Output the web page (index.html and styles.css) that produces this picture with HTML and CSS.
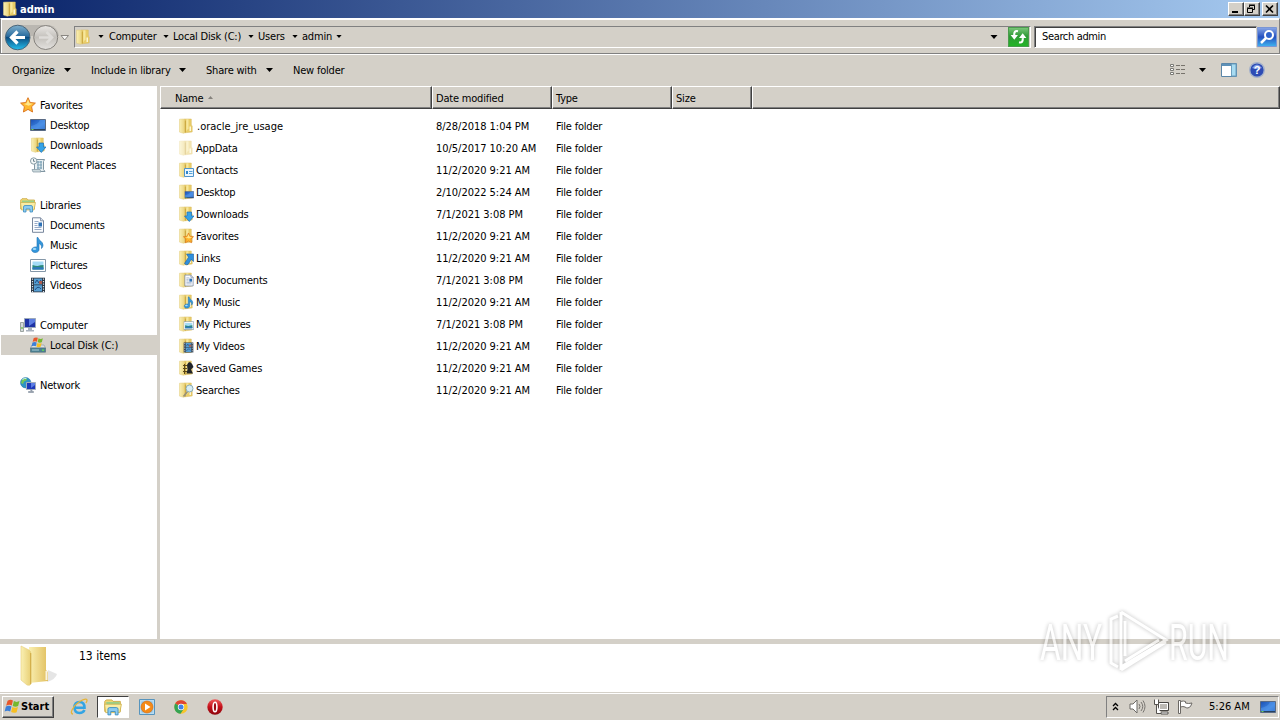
FILE: index.html
```html
<!DOCTYPE html>
<html lang="en">
<head>
  <meta charset="UTF-8">
  <meta name="viewport" content="width=device-width, initial-scale=1.0">
  <title>admin</title>
  <link rel="stylesheet" href="styles.css">
</head>
<body>
  <!-- shared icons -->
  <svg class="sprite" width="0" height="0">
    <defs>
      <linearGradient id="gold" x1="0" x2="1"><stop offset="0" stop-color="#f9eda4"/><stop offset="1" stop-color="#dcb443"/></linearGradient>
      <linearGradient id="leaf" x1="0" x2="1"><stop offset="0" stop-color="#faf0b4"/><stop offset="1" stop-color="#e8cf74"/></linearGradient>
      <linearGradient id="screen" x1="0" y1="0" x2="1" y2="1"><stop offset="0" stop-color="#1a4fb4"/><stop offset=".6" stop-color="#3f86e0"/><stop offset="1" stop-color="#2158b5"/></linearGradient>
      <linearGradient id="blueball" x1="0" y1="0" x2="0" y2="1"><stop offset="0" stop-color="#7fb0cd"/><stop offset=".45" stop-color="#2a6c9f"/><stop offset=".5" stop-color="#0c4c80"/><stop offset="1" stop-color="#25c0ee"/></linearGradient>
      <linearGradient id="greyball" x1="0" y1="0" x2="0" y2="1"><stop offset="0" stop-color="#e9e7e4"/><stop offset=".5" stop-color="#c3c0bb"/><stop offset="1" stop-color="#e4e2df"/></linearGradient>
      <linearGradient id="green" x1="0" y1="0" x2="0" y2="1"><stop offset="0" stop-color="#7dc77c"/><stop offset=".45" stop-color="#2f9a35"/><stop offset="1" stop-color="#22b626"/></linearGradient>
      <linearGradient id="find" x1="0" y1="0" x2="0" y2="1"><stop offset="0" stop-color="#8aa8e6"/><stop offset=".5" stop-color="#2450c0"/><stop offset="1" stop-color="#3fb4f0"/></linearGradient>
      <linearGradient id="redball" x1="0" y1="0" x2="0" y2="1"><stop offset="0" stop-color="#ef5a5a"/><stop offset=".5" stop-color="#c4101a"/><stop offset="1" stop-color="#8c060c"/></linearGradient>

      <symbol id="folder" viewBox="0 0 16 16">
        <path d="M6 1h7.300v6l.9.8V14L7 14.800z" fill="#e9cd68" stroke="#d9b95c" stroke-width=".5"/>
        <path d="M8.300 1.300h2.200v9l-2.200 3z" fill="#f7e79c"/>
        <path d="M11.500 8.500h1.500V13h-1.500z" fill="#fdf6d4"/>
        <path d="M1.500 1.200L5.500 1l2 1v12.500l-2 .8-4-1.200z" fill="url(#leaf)" stroke="#e3ca78" stroke-width=".5"/>
        <path d="M7.300 2.500v12" stroke="#c49c30" stroke-width=".9"/>
      </symbol>
      <symbol id="desktop" viewBox="0 0 16 16">
        <path d="M.5 2.500h15v11H.5z" fill="url(#screen)" stroke="#596a84"/>
        <path d="M1 9c5-1 8-3 9-6h5v9H1z" fill="#5b9df0" opacity=".45"/>
        <path d="M1 12.500h14" stroke="#27415f"/>
        <path d="M1.500 12.500h2" stroke="#6cce58"/>
      </symbol>
      <symbol id="down" viewBox="0 0 16 16">
        <path d="M9 6h4.500v4H16l-4.700 5.500L6.500 10H9z" fill="#35a3e8" stroke="#1c6fb4" stroke-width=".7"/>
      </symbol>
      <symbol id="star" viewBox="0 0 16 16">
        <path d="M8 .7l2.200 4.800 5.200.6-3.800 3.600 1 5.300L8 12.400 3.400 15l1-5.300L.6 6.100l5.200-.6z" fill="#ffb82e" stroke="#d9701c" stroke-width=".9"/>
        <path d="M8 2.500l1.500 3.700 3.500.6-4.500 2L4 7l2.600-.8z" fill="#ffe78c"/>
      </symbol>
      <symbol id="recent" viewBox="0 0 16 16">
        <path d="M4.500 2.500h10l-1 2v8l1.500 2H5.500l-1-2z" fill="#e7eff2" stroke="#8196a2"/>
        <path d="M7 5h5M7 8h5M7 11h5" stroke="#7fa4ba" stroke-width="1.200"/>
        <path d="M8 4v8M11 4v8" stroke="#7299ae"/>
        <circle cx="3.700" cy="4" r="3.200" fill="#f5f8f8" stroke="#889ca5"/>
        <path d="M3.500 2v2.300h1.700" fill="none" stroke="#526c78" stroke-width=".8"/>
        <path d="M2 12.500h8l1 2.500H3z" fill="#cbd8dc" stroke="#8196a2" stroke-width=".7"/>
      </symbol>
      <symbol id="library" viewBox="0 0 16 16">
        <path d="M.7 3L2 1.700h5L8 3h6.500v9H.7z" fill="#f1d874" stroke="#c9a63e" stroke-width=".8"/>
        <path d="M2 3.500h12v3H2z" fill="#9bcf88"/>
        <path d="M.5 5.500h15L14 13H1.500z" fill="#faeca4" stroke="#cdb04a" stroke-width=".7"/>
        <path d="M3.500 15V10q0-1.500 1.500-1.500h6q1.500 0 1.500 1.500v5H10v-3H6v3z" fill="#8ccbf0" stroke="#3c8dc0" stroke-width=".8"/>
      </symbol>
      <symbol id="document" viewBox="0 0 16 16">
        <path d="M2.500.8h8l3 3v11.500h-11z" fill="#fbfcfe" stroke="#78879d"/>
        <path d="M10.500.8v3h3" fill="#d7deea" stroke="#78879d" stroke-width=".8"/>
        <path d="M4.500 4.500h4M4.500 6.500h3M4.500 8.500h3M4.500 10.500h7M4.500 12.500h7" stroke="#7d94b8" stroke-width=".8"/>
        <path d="M8.500 5.500h3.500v4H8.500z" fill="#2d71b6"/>
      </symbol>
      <symbol id="music" viewBox="0 0 16 16">
        <path d="M8 .5c.5 3 5 4 5 7.500 0 1.500-.6 2.600-1.500 3.500.5-3-1-4.500-2.500-5v6.300C9 14.500 7 15.600 5 15.500c-2.200-.1-3.500-1.400-3.300-3C2 10.600 4.500 9.600 7 10V.5z" fill="#3397dc" stroke="#1d6fb2" stroke-width=".6"/>
        <ellipse cx="4.500" cy="12" rx="1.800" ry="1" fill="#a4dcfa"/>
      </symbol>
      <symbol id="picture" viewBox="0 0 16 16">
        <path d="M.5 2.500h15v12H.5z" fill="#fff" stroke="#8497a8"/>
        <path d="M2.500 4.500h11v8h-11z" fill="#a4dbf6"/>
        <path d="M2.500 8q3 1 5 1 3-1 6-1v4.500h-11z" fill="#2d8a78"/>
        <path d="M2.500 10.500q5-1 11 0v2h-11z" fill="#2d78bd"/>
      </symbol>
      <symbol id="video" viewBox="0 0 16 16">
        <path d="M1 .7h14v14.600H1z" fill="#2a3644"/>
        <path d="M4 1.500h8v6H4zM4 8.300h8v6.200H4z" fill="#569ed2"/>
        <path d="M5 6l2-3 2 3 2-3M5 13q3-5 6-1" stroke="#214f86" fill="none"/>
        <path d="M9 4h3v3H9z" fill="#ad5e50"/>
        <path d="M2.500 1.500v14M13.500 1.500v14" stroke="#dce6ee" stroke-width="1.200" stroke-dasharray="1.300 1.200"/>
      </symbol>
      <symbol id="computer" viewBox="0 0 16 16">
        <path d="M4.500 1.500h11v9h-11z" fill="#1d32a4" stroke="#9aa8ba"/>
        <path d="M9 2h6v3l-6 4z" fill="#6a8ef0" opacity=".8"/>
        <path d="M8 11h4v2H8zM6 13h8v1.500H6z" fill="#a9b2be"/>
        <path d="M.5 5.500h3v9h-3z" fill="#d5dadb" stroke="#88928e" stroke-width=".8"/>
        <path d="M1.200 11h1.600" stroke="#62bb38" stroke-width="1.300"/>
      </symbol>
      <symbol id="winflag" viewBox="0 0 16 16">
        <path d="M3.400 2.500q2.500-1.500 5-.2L7.300 7Q5 5.800 2 7.200z" fill="#e8572a"/>
        <path d="M9.300 2.900q2.500 1.500 5.300 0L13.300 7.600q-2.600 1.200-5.100-.1z" fill="#76b82e"/>
        <path d="M1.800 8.100q2.800-1.400 5.200-.1l-1.200 4.700q-2.600-1.300-5.200.1z" fill="#3c7fd8"/>
        <path d="M7.900 8.500q2.500 1.300 5.200 0l-1.200 4.800q-2.700 1.200-5.200-.1z" fill="#f7bf22"/>
      </symbol>
      <symbol id="disk" viewBox="0 0 16 16">
        <path d="M2 8h12l1.500 3H.5z" fill="#dbe0e3" stroke="#8b969d" stroke-width=".6"/>
        <path d="M.5 11h15v4.200H.5z" fill="#4d8294" stroke="#466873" stroke-width=".6"/>
        <path d="M2 13h7" stroke="#a7cad4"/><path d="M12 13.200h2" stroke="#67e04e" stroke-width="1.300"/>
        <use href="#winflag" x="1" y="-1" width="13" height="13"/>
      </symbol>
      <symbol id="network" viewBox="0 0 16 16">
        <circle cx="5.700" cy="5.700" r="5.200" fill="#2d93c6" stroke="#2a7ba5" stroke-width=".6"/>
        <path d="M2 3q2-2.300 4-2l1 2-3 1.500L3 7 1 6zM6 6l3-1v4l-3 1z" fill="#74c756"/>
        <path d="M2.500 2.500q2-1.600 4-1.200" stroke="#d6f4fc" fill="none"/>
        <path d="M6.500 5.500h9v7h-9z" fill="#1c39ba" stroke="#a1acbd"/>
        <path d="M11 6h4v2l-4 3z" fill="#6a8ef0" opacity=".8"/>
        <path d="M10 13h2v1.500H8.500v1h5v-1H12" stroke="#7b8796" fill="#a9b2be" stroke-width=".6"/>
      </symbol>
      <symbol id="contact" viewBox="0 0 16 16">
        <path d="M6.500 6.500h9v8h-9z" fill="#eaf5fd" stroke="#4f94cb"/>
        <path d="M8 9h2v3H8z" fill="#2f86cc"/><path d="M11 9.500h3.500M11 11.500h3.500" stroke="#58a3d8"/>
      </symbol>
      <symbol id="link" viewBox="0 0 16 16">
        <path d="M8.500 4h7v7.500l-2.300-2L10 14.500q-2 1-3.500-1l4-6.300z" fill="#2f8fdc" stroke="#1a609f" stroke-width=".6"/>
      </symbol>
      <symbol id="knight" viewBox="0 0 16 16">
        <path d="M9 5q1-3 3-3 3 2 3.500 5l-2.500 2.500 2 4H8.500l1-4z" fill="#22252a"/>
        <path d="M5 5.500h4M5 8.500h4M5 11.500h4M6.500 4v10" stroke="#5c4a1a"/>
      </symbol>
      <symbol id="lens" viewBox="0 0 16 16">
        <path d="M9.500 9.500l-4 5" stroke="#9a9276" stroke-width="1.800"/>
        <circle cx="11.500" cy="6.500" r="3.500" fill="#d7edf5" stroke="#8aabb6"/>
      </symbol>
      <symbol id="caret" viewBox="0 0 7 4"><path d="M0 0h7L3.500 4z" fill="#000"/></symbol>
    </defs>
  </svg>

  <div class="titlebar">
    <svg class="icon"><use href="#folder"/></svg>
    <span class="window-title">admin</span>
    <div class="window-buttons">
      <button class="win-btn" aria-label="Minimize"><svg width="11" height="10"><path d="M2 8h6" stroke="#000" stroke-width="2"/></svg></button>
      <button class="win-btn" aria-label="Restore"><svg width="11" height="10"><path d="M3.500 3V1.500h5v4H7M3 1h6M1.500 4.500h5v4h-5zM1 4h6" fill="none" stroke="#000"/></svg></button>
      <button class="win-btn close" aria-label="Close"><svg width="11" height="10"><path d="M2 1.500l7 7M9 1.500l-7 7" stroke="#000" stroke-width="1.600"/></svg></button>
    </div>
  </div>

  <div class="navbar">
    <div class="travel">
      <svg width="71" height="32" viewBox="2 0 71 32">
        <path d="M14 4h34a12 12 0 0 1 10 11H14z" fill="#bab7b1"/>
        <circle cx="16.700" cy="16.500" r="12.300" fill="url(#blueball)" stroke="#496579"/>
        <path d="M24 16.500H11.500M16.500 10.500l-6 6 6 6" fill="none" stroke="#fff" stroke-width="3.200"/>
        <circle cx="44.700" cy="16.500" r="12" fill="url(#greyball)" stroke="#85827d"/>
        <path d="M38 16.500h12M45.500 11l5.500 5.500-5.500 5.500" fill="none" stroke="#dedcd9" stroke-width="2.600"/>
        <path d="M60 14.500h7.500L63.700 19z" fill="#f6f5f3" stroke="#898681"/>
      </svg>
    </div>
    <div class="address">
      <svg class="icon"><use href="#folder"/></svg>
      <svg class="caret first"><use href="#caret"/></svg>
      <span class="crumb c-computer">Computer</span><svg class="caret"><use href="#caret"/></svg>
      <span class="crumb c-disk">Local Disk (C:)</span><svg class="caret"><use href="#caret"/></svg>
      <span class="crumb c-users">Users</span><svg class="caret"><use href="#caret"/></svg>
      <span class="crumb c-admin">admin</span><svg class="caret"><use href="#caret"/></svg>
      <svg class="caret history"><use href="#caret"/></svg>
      <svg class="refresh" width="21" height="20" viewBox="0 0 20 19">
        <path d="M.5.5h19v18H.5z" fill="url(#green)" stroke="#4a9b4d"/>
        <path d="M9.500 4q-4-1-3.500 4M10.500 14.500q4 1 3.500-4" fill="none" stroke="#fff" stroke-width="2"/>
        <path d="M2.500 7.500h7L6 12zM10.500 10.500h7L14 6z" fill="#fff"/>
      </svg>
    </div>
    <div class="search">Search admin</div>
    <svg class="find" width="20" height="20" viewBox="0 0 20 20">
      <path d="M.5.5h19v19H.5z" fill="url(#find)" stroke="#7a96d4"/>
      <path d="M9 11l-5 5" stroke="#fff" stroke-width="2.500"/>
      <circle cx="12" cy="8" r="4" fill="#2e62cb" stroke="#fff" stroke-width="2"/>
    </svg>
  </div>

  <div class="toolbar">
    <span class="tool organize">Organize</span><svg class="caret"><use href="#caret"/></svg>
    <span class="tool include">Include in library</span><svg class="caret"><use href="#caret"/></svg>
    <span class="tool share">Share with</span><svg class="caret"><use href="#caret"/></svg>
    <span class="tool">New folder</span>
    <div class="view-tools">
      <svg width="16" height="14" viewBox="0 0 16 14">
        <path d="M.5 1.500h3v2h-3zM.5 5.500h3v2h-3zM.5 9.500h3v2h-3z" fill="#fff" stroke="#7a7a76"/>
        <path d="M6 2.500h4m1 0h4M6 6.500h4m1 0h4M6 10.500h4m1 0h4" stroke="#77736c"/>
      </svg>
      <svg class="caret"><use href="#caret"/></svg>
      <svg width="16" height="14" viewBox="0 0 16 14">
        <path d="M.5.5h15v13H.5z" fill="#fff" stroke="#5a86a8"/><path d="M1 2h9" stroke="#5d91b8" stroke-width="2"/>
        <path d="M10.500 1h4.500v12h-4.500z" fill="#a8dcf2" stroke="#6d9fbe"/>
      </svg>
      <svg width="16" height="16" viewBox="0 0 16 16">
        <circle cx="8" cy="8" r="7.300" fill="#2d4bb4" stroke="#a5b2ca" stroke-width="1.400"/>
        <path d="M3 6q5-7 10 0-5 2-10 0" fill="#7f9de6"/>
        <text x="8" y="12.300" class="help-mark">?</text>
      </svg>
    </div>
  </div>

  <div class="main">
    <nav class="sidebar">
      <div class="group">
        <div class="node root"><svg class="icon"><use href="#star"/></svg><span>Favorites</span></div>
        <div class="node"><svg class="icon"><use href="#desktop"/></svg><span>Desktop</span></div>
        <div class="node"><svg class="icon"><use href="#folder"/><use href="#down"/></svg><span>Downloads</span></div>
        <div class="node"><svg class="icon"><use href="#recent"/></svg><span>Recent Places</span></div>
      </div>
      <div class="group">
        <div class="node root"><svg class="icon"><use href="#library"/></svg><span>Libraries</span></div>
        <div class="node"><svg class="icon"><use href="#document"/></svg><span>Documents</span></div>
        <div class="node"><svg class="icon"><use href="#music"/></svg><span>Music</span></div>
        <div class="node"><svg class="icon"><use href="#picture"/></svg><span>Pictures</span></div>
        <div class="node"><svg class="icon"><use href="#video"/></svg><span>Videos</span></div>
      </div>
      <div class="group">
        <div class="node root"><svg class="icon"><use href="#computer"/></svg><span>Computer</span></div>
        <div class="node selected"><svg class="icon"><use href="#disk"/></svg><span>Local Disk (C:)</span></div>
      </div>
      <div class="group">
        <div class="node root"><svg class="icon"><use href="#network"/></svg><span>Network</span></div>
      </div>
    </nav>

    <div class="files">
      <div class="row header">
        <div class="cell name">Name<svg class="sort" width="5" height="3"><path d="M0 3h5L2.500 0z" fill="#85827c"/></svg></div>
        <div class="cell">Date modified</div>
        <div class="cell">Type</div>
        <div class="cell">Size</div>
        <div class="cell"></div>
      </div>
      <div class="list">
        <div class="row"><div class="cell name"><svg class="icon"><use href="#folder"/></svg><span class="dotted">.oracle_jre_usage</span></div><div class="cell date">8/28/2018 1:04 PM</div><div class="cell">File folder</div></div>
        <div class="row"><div class="cell name"><svg class="icon hidden-item"><use href="#folder"/></svg><span>AppData</span></div><div class="cell date">10/5/2017 10:20 AM</div><div class="cell">File folder</div></div>
        <div class="row"><div class="cell name"><svg class="icon"><use href="#folder"/><use href="#contact"/></svg><span>Contacts</span></div><div class="cell date">11/2/2020 9:21 AM</div><div class="cell">File folder</div></div>
        <div class="row"><div class="cell name"><svg class="icon"><use href="#folder"/><use href="#desktop" x="6.500" y="6" width="9.500" height="9.500"/></svg><span>Desktop</span></div><div class="cell date">2/10/2022 5:24 AM</div><div class="cell">File folder</div></div>
        <div class="row"><div class="cell name"><svg class="icon"><use href="#folder"/><use href="#down"/></svg><span>Downloads</span></div><div class="cell date">7/1/2021 3:08 PM</div><div class="cell">File folder</div></div>
        <div class="row"><div class="cell name"><svg class="icon"><use href="#folder"/><use href="#star" x="5" y="4.500" width="11" height="11"/></svg><span>Favorites</span></div><div class="cell date">11/2/2020 9:21 AM</div><div class="cell">File folder</div></div>
        <div class="row"><div class="cell name"><svg class="icon"><use href="#folder"/><use href="#link"/></svg><span>Links</span></div><div class="cell date">11/2/2020 9:21 AM</div><div class="cell">File folder</div></div>
        <div class="row"><div class="cell name"><svg class="icon"><use href="#folder"/><use href="#document" x="5" y="2" width="12" height="13"/></svg><span>My Documents</span></div><div class="cell date">7/1/2021 3:08 PM</div><div class="cell">File folder</div></div>
        <div class="row"><div class="cell name"><svg class="icon"><use href="#folder"/><use href="#music" x="5" y="2" width="12" height="13"/></svg><span>My Music</span></div><div class="cell date">11/2/2020 9:21 AM</div><div class="cell">File folder</div></div>
        <div class="row"><div class="cell name"><svg class="icon"><use href="#folder"/><use href="#picture" x="5.500" y="4" width="10.500" height="10.500"/></svg><span>My Pictures</span></div><div class="cell date">7/1/2021 3:08 PM</div><div class="cell">File folder</div></div>
        <div class="row"><div class="cell name"><svg class="icon"><use href="#folder"/><use href="#video" x="5" y="4" width="11" height="11"/></svg><span>My Videos</span></div><div class="cell date">11/2/2020 9:21 AM</div><div class="cell">File folder</div></div>
        <div class="row"><div class="cell name"><svg class="icon"><use href="#folder"/><use href="#knight"/></svg><span>Saved Games</span></div><div class="cell date">11/2/2020 9:21 AM</div><div class="cell">File folder</div></div>
        <div class="row"><div class="cell name"><svg class="icon"><use href="#folder"/><use href="#lens"/></svg><span>Searches</span></div><div class="cell date">11/2/2020 9:21 AM</div><div class="cell">File folder</div></div>
      </div>
    </div>
  </div>

  <div class="details">
    <svg width="38" height="42" viewBox="0 0 38 42">
      <path d="M27 37q9-3 10-8l-9-4z" fill="#000" opacity=".1"/>
      <path d="M9 2h17v23l2 2v9L9 38z" fill="url(#gold)" opacity=".85"/>
      <path d="M25.500 26h2v9h-2z" fill="#fff" opacity=".8"/>
      <path d="M1 1l8 4q2 1 2 4v30q-1 2-4 1l-6-5z" fill="url(#leaf)" stroke="#e5cd7a" stroke-width=".6"/>
      <path d="M10.700 8v31" stroke="#cfa943"/>
    </svg>
    <span class="count">13 items</span>
  </div>

  <div class="taskbar">
    <button class="start"><svg width="17" height="17" viewBox="0 0 16 16"><use href="#winflag"/></svg>Start</button>
    <div class="launch">
      <div class="task">
        <svg width="18" height="18" viewBox="0 0 18 18">
          <path d="M14.500 12q-1.500 3-5 3-5 0-5-5.500T9.500 4q5 0 5 5.700H5" fill="none" stroke="#32a4e4" stroke-width="2.600"/>
          <path d="M3 16C-1 16 3 8 9 4s10-4 7 1" fill="none" stroke="#e6b437" stroke-width="1.300"/>
        </svg>
      </div>
      <div class="task active"><svg width="18" height="18"><use href="#library"/></svg></div>
      <div class="task">
        <svg width="16" height="16" viewBox="0 0 16 16">
          <path d="M.5.5h15v15H.5z" fill="#b8dcf2" stroke="#5794bd"/><path d="M2.500 2.500h11v11h-11z" fill="#8dbfdf"/>
          <circle cx="8" cy="8" r="6" fill="#f58a16" stroke="#d8680c" stroke-width=".6"/><path d="M6 4.500v7L11.500 8z" fill="#fff"/>
        </svg>
      </div>
      <div class="task">
        <svg width="14" height="14" viewBox="0 0 14 14">
          <circle cx="7" cy="7" r="6.700" fill="#f7c52c"/>
          <path d="M7 7L1.200 3.600A6.700 6.700 0 0 1 12.900 4H7z" fill="#de4535"/>
          <path d="M7 7L1.200 3.600A6.700 6.700 0 0 0 6.500 13.700L10 8.500z" fill="#34a353"/>
          <circle cx="7" cy="7" r="3.200" fill="#fff"/><circle cx="7" cy="7" r="2.500" fill="#4081e8"/>
        </svg>
      </div>
      <div class="task">
        <svg width="16" height="16" viewBox="0 0 16 16"><circle cx="8" cy="8" r="7.700" fill="url(#redball)"/><ellipse cx="8" cy="8" rx="1.900" ry="4.800" fill="#9a0b12" stroke="#fff" stroke-width="1.600"/></svg>
      </div>
    </div>
    <div class="tray">
      <svg width="7" height="9" viewBox="0 0 7 9"><path d="M1 4l2.500-2.500L6 4M1 8l2.500-2.500L6 8" fill="none" stroke="#000" stroke-width="1.300"/></svg>
      <svg class="speaker" width="17" height="15" viewBox="0 0 17 15"><path d="M1 5h3l4-4v13L4 10H1z" fill="#fff" stroke="#6d6a66"/><path d="M10 5q2 2.500 0 5M12 3q3.500 4.500 0 9M14 1.500q4 6 0 12" fill="none" stroke="#777470"/></svg>
      <svg class="lan" width="17" height="16" viewBox="0 0 17 16"><path d="M5.500 3.500h10v8h-10z" fill="#bcb9b4" stroke="#484643"/><path d="M6.500 4.500h8v6h-8z" fill="none" stroke="#fff"/><path d="M8 13h7v2H8z" fill="#fff" stroke="#55524e"/><path d="M1.500.5v5h4v-5M3.500 5v9.500H8" fill="#fff" stroke="#55524e"/></svg>
      <svg class="flag" width="16" height="16" viewBox="0 0 16 16"><path d="M1.500 1.500h2v13h-2z" fill="#fff" stroke="#6b6864"/><path d="M3.500 2.500q3-1 5 0v1.500q3 1 6.500 0-1 4.500-4 5-2 0-3-1-2-1-4.500 0z" fill="#fff" stroke="#6b6864"/></svg>
      <span class="clock">5:26 AM</span>
      <svg class="icon"><use href="#desktop"/></svg>
    </div>
  </div>

  <!-- watermark over the window -->
  <svg class="watermark" width="210" height="76" viewBox="0 0 210 76">
    <text x="5" y="56" textLength="62" lengthAdjust="spacingAndGlyphs">ANY</text>
    <text x="134" y="56" textLength="60" lengthAdjust="spacingAndGlyphs">RUN</text>
    <path d="M86 8l45 28-45 27M86 66V8M90 52V17M83 12l-7 3v44l7 4M86 66l45-28M90 57l34-21" fill="none" stroke="#fff" stroke-width="3"/>
  </svg>
</body>
</html>
```
FILE: styles.css
```css
* {
  box-sizing: border-box;
}
body {
  margin: 0;
  width: 1280px;
  height: 720px;
  overflow: hidden;
  display: flex;
  flex-direction: column;
  background: #d4d0c8;
  color: #000;
  font-family: "DejaVu Sans Condensed", "DejaVu Sans", sans-serif;
  font-stretch: condensed;
  font-size: 11px;
  letter-spacing: -0.2px;
  white-space: nowrap;
}
svg {
  display: block;
  flex: none;
}
.sprite {
  position: absolute;
}
.icon {
  width: 16px;
  height: 16px;
}
.caret {
  width: 7px;
  height: 4px;
}

/* title bar */
.titlebar {
  height: 18px;
  flex: none;
  display: flex;
  align-items: center;
  padding: 0 2px;
  background: linear-gradient(to right, #0a246a, #a6caf0);
}
.window-title {
  margin-left: 2px;
  color: #fff;
  font-weight: bold;
  letter-spacing: 0;
}
.window-buttons {
  display: flex;
  margin-left: auto;
}
.win-btn {
  width: 16px;
  height: 14px;
  padding: 0 0 0 1px;
  background: #d4d0c8;
  border: 1px solid;
  border-color: #fff #404040 #404040 #fff;
  box-shadow: inset -1px -1px #808080;
}
.win-btn.close {
  margin-left: 2px;
}

/* address bar */
.navbar {
  height: 36px;
  flex: none;
  display: flex;
  align-items: center;
  padding: 2px 1px 0 2px;
  border: 1px solid #808080;
  border-top-color: #fff;
  box-shadow: inset 1px 1px #fff, 0 1px #fff;
}
.travel {
  width: 71px;
  height: 32px;
}
.address {
  width: 957px;
  height: 22px;
  display: flex;
  align-items: center;
  padding-bottom: 1px;
  border: 1px solid;
  border-color: #808080 #fff #fff #808080;
}
.address .caret {
  width: 6px;
  height: 3px;
}
.address .first {
  margin: 0 5px 0 7px;
}
.crumb {
  margin-right: 6px;
}
.crumb + .caret {
  margin-right: 4px;
}
.c-computer { width: 48px; }
.c-disk { width: 69px; }
.c-users { width: 28px; }
.c-admin { width: 28px; }
.address .history {
  width: 8px;
  height: 4px;
  margin: 0 10px 0 auto;
}
.refresh {
  margin-right: 1px;
}
.search {
  width: 223px;
  height: 22px;
  margin: 0 0 0 3px;
  padding: 3px 7px;
  background: #fff;
  border: 1px solid;
  border-color: #808080 #d4d0c8 #fff #808080;
  box-shadow: inset 1px 1px #404040;
  letter-spacing: -0.35px;
}

/* command bar */
.toolbar {
  height: 32px;
  flex: none;
  display: flex;
  align-items: center;
  padding-left: 12px;
}
.toolbar .caret {
  margin-right: 20px;
}
.organize { width: 52px; }
.include { width: 88px; }
.share { width: 60px; }
.view-tools {
  display: flex;
  align-items: center;
  margin: 0 15px 0 auto;
}
.view-tools .caret {
  margin: 0 15px 0 13px;
}
.view-tools svg:last-child {
  margin-left: 12px;
}
.help-mark {
  font: bold 11px "Liberation Sans", sans-serif;
  fill: #fff;
  text-anchor: middle;
}

/* panes */
.main {
  height: 553px;
  flex: none;
  display: flex;
}
.sidebar {
  width: 160px;
  padding: 9px 0 0 1px;
  background: #fff;
  border-right: 3px solid #d4d0c8;
}
.group {
  margin-bottom: 20px;
}
.node {
  height: 20px;
  display: flex;
  align-items: center;
  gap: 4px;
  padding-left: 29px;
}
.node.root {
  padding-left: 19px;
}
.selected {
  background: #d4d0c8;
}
.files {
  flex: 1;
  background: #fff;
}
.row {
  display: grid;
  grid-template-columns: 272px 120px 120px 80px 1fr;
  height: 22px;
}
.cell {
  display: flex;
  align-items: center;
  padding-left: 4px;
}
.date {
  letter-spacing: -0.03px;
}
.header {
  height: 23px;
  background: #d4d0c8;
}
.header .cell {
  border: 1px solid;
  border-color: #fff #404040 #404040 #fff;
  box-shadow: inset -1px -1px #808080;
  padding: 2px 0 0 3px;
}
.header .name {
  padding-left: 14px;
}
.sort {
  margin: -3px 0 0 5px;
}
.list {
  padding-top: 6px;
}
.list .name {
  padding-left: 18px;
  gap: 2px;
}
.dotted {
  padding-left: 1px;
  letter-spacing: 0;
}
.hidden-item {
  opacity: 0.5;
}

/* details pane */
.details {
  height: 54px;
  flex: none;
  display: flex;
  padding: 1px 0 0 20px;
  background: #fff;
  border-top: 5px solid #d4d0c8;
  border-bottom: 1px solid #d4d0c8;
}
.count {
  margin: 4px 0 0 21px;
  font-size: 12px;
  letter-spacing: 0;
}

/* taskbar */
.taskbar {
  flex: 1;
  display: flex;
  align-items: center;
  padding: 0 1px 1px 2px;
  border-top: 1px solid #fff;
}
.start {
  width: 52px;
  height: 22px;
  display: flex;
  align-items: center;
  padding: 0 0 0 1px;
  background: #d4d0c8;
  border: 1px solid;
  border-color: #fff #404040 #404040 #fff;
  box-shadow: inset -1px -1px #808080;
  font: bold 11px "DejaVu Sans Condensed", "DejaVu Sans", sans-serif;
  font-stretch: condensed;
  color: #000;
}
.launch {
  display: flex;
  gap: 2px;
  margin-left: 9px;
}
.task {
  width: 32px;
  height: 22px;
  display: flex;
  align-items: center;
  justify-content: center;
}
.task.active {
  background: #fff;
  border: 1px solid;
  border-color: #404040 #fff #fff #404040;
}
.tray {
  width: 173px;
  height: 22px;
  display: flex;
  align-items: center;
  margin-left: auto;
  padding-left: 5px;
  border: 1px solid;
  border-color: #808080 #fff #fff #808080;
}
.speaker { margin-left: 10px; }
.lan { margin-left: 7px; }
.flag { margin-left: 7px; }
.clock {
  width: 41px;
  margin: 0 10px 0 16px;
  letter-spacing: 0;
}

.watermark {
  position: absolute;
  left: 1035px;
  top: 604px;
  opacity: 0.65;
  filter: drop-shadow(0 0 2px rgba(0, 0, 0, 0.4));
}
.watermark text {
  font: 50px Roboto, sans-serif;
  letter-spacing: 0;
  fill: #fff;
}
```
